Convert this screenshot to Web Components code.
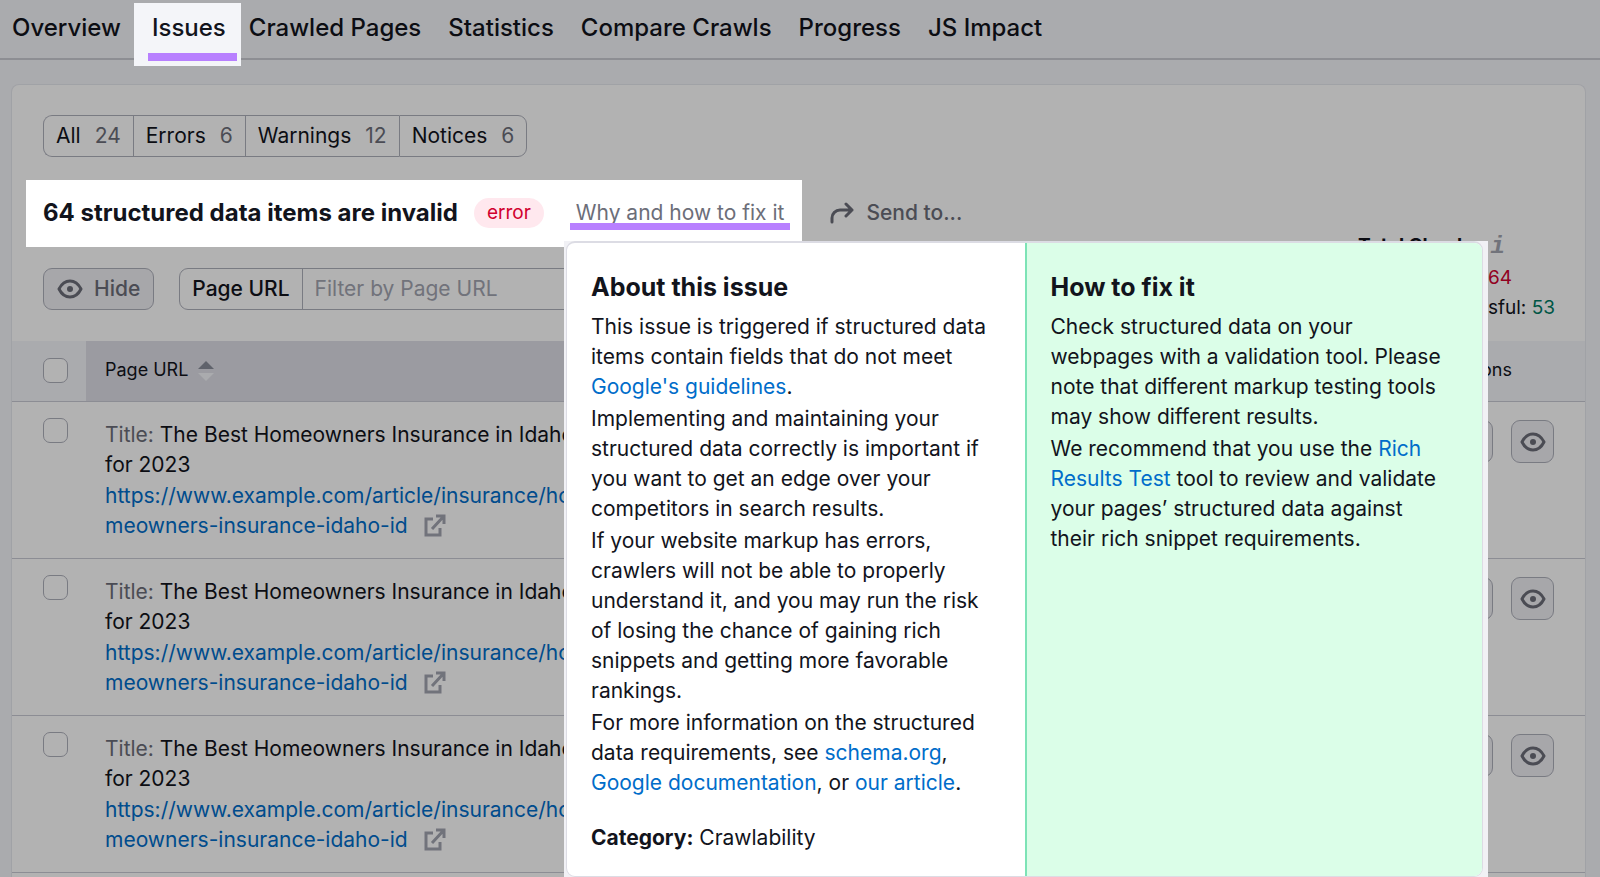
<!DOCTYPE html>
<html lang="en">
<head>
<meta charset="utf-8">
<title>Site Audit: Issues</title>
<style>
    html, body { height: 100%; }
    body {
        --text: #12141c;
        --muted: #6c6e79;
        --line: #c9cad4;
        --control-line: #aeb0bb;
        --link: #006dca;
        --accent: #b880ff;
        --page: #f4f5f9;
        margin: 0;
        overflow: hidden;
        background: var(--page);
        color: var(--text);
        font: 21px/30px Inter, "Liberation Sans", sans-serif;
    }
    issue-popover a { color: var(--link); text-decoration: none; }
    issue-popover[hidden] { display: none; }
</style>
</head>
<body>

<audit-page>
    <audit-tabs slot="tabs">
        <audit-tab>Overview</audit-tab>
        <audit-tab active>Issues</audit-tab>
        <audit-tab>Crawled Pages</audit-tab>
        <audit-tab>Statistics</audit-tab>
        <audit-tab>Compare Crawls</audit-tab>
        <audit-tab>Progress</audit-tab>
        <audit-tab>JS Impact</audit-tab>
    </audit-tabs>

    <issue-filter></issue-filter>
    <issue-headline level="error">64 structured data items are invalid</issue-headline>
    <issue-toolbar></issue-toolbar>
    <issue-table></issue-table>

    <issue-popover slot="popover">
        <h3 slot="about-title">About this issue</h3>
        <p slot="about">This issue is triggered if structured data items contain fields that do not meet <a href="#guidelines">Google's guidelines</a>.</p>
        <p slot="about">Implementing and maintaining your structured data correctly is important if you want to get an edge over your competitors in search results.</p>
        <p slot="about">If your website markup has errors, crawlers will not be able to properly understand it, and you may run the risk of losing the chance of gaining rich snippets and getting more favorable rankings.</p>
        <p slot="about">For more information on the structured data requirements, see <a href="#schema">schema.org</a>, <a href="#docs">Google documentation</a>, or <a href="#article">our article</a>.</p>
        <span slot="category">Crawlability</span>
        <h3 slot="fix-title">How to fix it</h3>
        <p slot="fix">Check structured data on your webpages with a validation tool. Please note that different markup testing tools may show different results.</p>
        <p slot="fix">We recommend that you use the <a href="#rich-results">Rich Results Test</a> tool to review and validate your pages’ structured data against their rich snippet requirements.</p>
    </issue-popover>
</audit-page>

<template id="template-page">
    <slot name="tabs"></slot>
    <main>
        <slot></slot>
        <slot name="popover"></slot>
    </main>
    <div class="dim"></div>
    <style>
        :host { display: flex; flex-direction: column; height: 100vh; }
        main {
            position: relative;
            flex: 1;
            min-height: 0;
            overflow: hidden;
            margin: 24px 14px 0 11px;
            padding-top: 30px;
            background: #fff;
            border: 1px solid #e6e8ee;
            border-bottom: 0;
            border-radius: 8px 8px 0 0;
            box-sizing: border-box;
        }
        .dim {
            position: fixed;
            inset: 0;
            z-index: 1;
            background: rgba(0, 0, 0, 0.3);
            pointer-events: none;
        }
    </style>
</template>

<template id="template-tabs">
    <nav><slot></slot></nav>
    <style>
        :host { display: block; }
        nav {
            display: flex;
            gap: 27px;
            height: 58px;
            padding-left: 12px;
            border-bottom: 2px solid #cbccd3;
        }
    </style>
</template>

<template id="template-tab">
    <a href="#"><slot></slot></a>
    <style>
        :host { display: block; }
        a {
            display: block;
            box-sizing: border-box;
            padding-top: 12px;
            color: var(--text);
            font-size: 24px;
            line-height: 32px;
            font-weight: 500;
            white-space: nowrap;
            text-decoration: none;
        }
        :host([active]) { margin: 3px -19px 0 -14px; }
        :host([active]) a {
            position: relative;
            z-index: 2;
            height: 63px;
            padding: 9px 15px 0 18px;
            background: var(--page);
        }
        :host([active]) a::after {
            content: "";
            position: absolute;
            left: 14px;
            right: 4px;
            bottom: 5px;
            height: 8px;
            background: var(--accent);
        }
    </style>
</template>

<template id="template-filter">
    <button>All <span>24</span></button>
    <button>Errors <span>6</span></button>
    <button>Warnings <span>12</span></button>
    <button>Notices <span>6</span></button>
    <style>
        :host { display: flex; margin-left: 31px; }
        button {
            display: flex;
            gap: 14px;
            align-items: center;
            height: 42px;
            padding: 0 12px;
            border: 1px solid var(--control-line);
            border-right-width: 0;
            background: none;
            color: var(--text);
            font: inherit;
        }
        button:first-child { border-radius: 9px 0 0 9px; }
        button:last-of-type { border-right-width: 1px; border-radius: 0 9px 9px 0; }
        span { color: var(--muted); }
    </style>
</template>

<template id="template-headline">
    <div class="spotlight">
        <h2><slot></slot></h2>
        <span class="level"></span>
        <button class="why">Why and how to fix it</button>
    </div>
    <button class="send">
        <svg width="24" height="24" viewBox="0 0 24 24" fill="none" stroke="currentColor" stroke-width="3" stroke-linecap="round" stroke-linejoin="round">
            <path d="M2 21v-4a8 8 0 0 1 8-8h12M16 3l6 6-6 6"/>
        </svg>
        Send to...
    </button>
    <style>
        :host { display: flex; margin: 23px 0 0 14px; height: 67px; }
        .spotlight {
            position: relative;
            z-index: 2;
            display: flex;
            align-items: center;
            height: 67px;
            box-sizing: border-box;
            padding: 0 12px 2px 17px;
            background: #fff;
        }
        h2 { margin: 0; font-size: 24px; line-height: 32px; font-weight: 700; white-space: nowrap; }
        .level {
            margin-left: 16px;
            padding: 0 13px;
            border-radius: 16px;
            background: #ffe8ee;
            color: #d1002f;
            font-size: 19px;
        }
        button { padding: 0; border: 0; background: none; color: var(--muted); font: inherit; white-space: nowrap; }
        .why { position: relative; margin-left: 26px; padding: 0 6px; }
        .why::after {
            content: "";
            position: absolute;
            left: 0;
            right: 0;
            bottom: -2px;
            height: 7px;
            background: var(--accent);
        }
        .send { display: flex; align-items: center; gap: 12px; margin-left: 28px; padding-bottom: 2px; font-weight: 500; }
    </style>
</template>

<template id="template-toolbar">
    <button>
        <eye-icon></eye-icon>
        Hide
    </button>
    <div class="filter">
        <label for="url">Page URL</label>
        <input id="url" type="text" placeholder="Filter by Page URL">
    </div>
    <div class="totals">
        <div class="total"><strong>Total Checks</strong> <i>i</i></div>
        <div class="bad">64</div>
        <div>Successful: <b>53</b></div>
    </div>
    <style>
        :host { display: flex; margin: 21px 30px 0 31px; height: 73px; }
        button, .filter {
            display: flex;
            box-sizing: border-box;
            height: 42px;
            border: 1px solid var(--control-line);
            border-radius: 9px;
        }
        button {
            align-items: center;
            gap: 11px;
            padding: 0 13px;
            background: #f0f0f4;
            color: var(--muted);
            font: inherit;
            font-weight: 500;
        }
        .filter { margin-left: 25px; width: 480px; }
        label { padding: 5px 12px 0; border-right: 1px solid var(--control-line); font-weight: 500; white-space: nowrap; }
        input {
            flex: 1;
            min-width: 0;
            padding: 0 12px;
            border: 0;
            background: none;
            font: inherit;
            color: var(--text);
        }
        input::placeholder { color: #a3a5b1; opacity: 1; }
        .totals {
            display: flex;
            flex-direction: column;
            align-items: flex-end;
            margin: -37px 0 0 auto;
            font-size: 19px;
            white-space: nowrap;
        }
        .total { display: flex; gap: 12px; padding-right: 50px; }
        i {
            color: #a3a5b1;
            font: italic 700 24px/32px "Liberation Mono", monospace;
        }
        .bad { padding-right: 43px; color: #d1002f; }
        b { font-weight: 400; color: #007c65; }
    </style>
</template>

<template id="template-table">
    <table>
        <thead>
            <tr>
                <th class="check"><input type="checkbox" aria-label="Select all pages"></th>
                <th class="url">
                    Page URL
                    <svg width="16" height="20" viewBox="0 0 16 20"><path d="M0 8L8 0l8 8z" fill="#898d9a"/><path d="M0 12h16l-8 8z" fill="#f4f5f9"/></svg>
                </th>
                <th class="actions">Actions</th>
            </tr>
        </thead>
        <tbody></tbody>
    </table>
    <style>
        :host { display: block; }
        table { width: 100%; border-spacing: 0; table-layout: fixed; }
        th, td { border-bottom: 1px solid var(--line); box-sizing: border-box; }
        th {
            height: 61px;
            padding: 0 0 2px;
            background: var(--page);
            font-size: 18px;
            font-weight: 400;
            text-align: left;
        }
        .check { width: 74px; }
        th.url { padding-left: 19px; background: #dfdfe7; }
        th.url svg { margin-left: 5px; vertical-align: -5px; }
        th.actions { width: 137px; }
        td { height: 157px; padding: 18px 0 0; vertical-align: top; }
        td.check { padding-top: 16px; }
        td.url { padding-left: 19px; }
        p { width: 480px; margin: 0 0 1px; }
        p.title span { color: var(--muted); }
        a { color: var(--link); text-decoration: none; }
        a svg { margin-left: 10px; vertical-align: -4px; color: #a3a5b1; }
        input {
            appearance: none;
            display: block;
            box-sizing: border-box;
            width: 25px;
            height: 25px;
            margin: 0 0 0 31px;
            border: 1px solid var(--control-line);
            border-radius: 7px;
            background: #fff;
        }
        .buttons { display: flex; gap: 18px; justify-content: flex-end; padding-right: 31px; }
        button {
            display: flex;
            align-items: center;
            justify-content: center;
            width: 43px;
            height: 43px;
            padding: 0;
            border: 1px solid var(--control-line);
            border-radius: 9px;
            background: #f0f0f4;
            color: var(--muted);
        }
    </style>
</template>

<template id="template-popover">
    <div class="card">
        <section>
            <slot name="about-title"></slot>
            <slot name="about"></slot>
            <div class="category"><b>Category:</b> <slot name="category"></slot></div>
        </section>
        <section class="fix">
            <slot name="fix-title"></slot>
            <slot name="fix"></slot>
        </section>
    </div>
    <style>
        :host {
            position: absolute;
            z-index: 3;
            top: 156px;
            left: 552px;
            right: 97px;
            box-sizing: border-box;
            padding: 0 5px 0 2px;
            background: #f1f1f5;
        }
        .card {
            display: grid;
            grid-template-columns: 1fr 1fr;
            overflow: hidden;
            border: 1px solid #dcdce4;
            border-top-width: 2px;
            border-radius: 9px;
            background: #fff;
        }
        section { padding: 28px 32px 23px 24px; }
        .fix { border-left: 2px solid #7de3b6; background: #dbfee8; }
        ::slotted(h3) { margin: 0 0 9px; font-size: 25px; line-height: 32px; font-weight: 700; }
        ::slotted(p) { margin: 0 0 2px; }
        .category { margin-top: 25px; }
    </style>
</template>

<script>
    // Clones <template id="template-..."> into an open shadow root
    class TemplateElement extends HTMLElement {
        constructor(name) {
            super();
            const template = document.getElementById('template-' + name).content;
            this.shadow = this.attachShadow({ mode: 'open' });
            this.shadow.appendChild(template.cloneNode(true));
        }
    }

    customElements.define('eye-icon', class extends HTMLElement {
        constructor() {
            super();
            this.attachShadow({ mode: 'open' }).innerHTML = `
                <style>:host { display: flex; }</style>
                <svg width="26" height="20" viewBox="0 0 26 20" fill="none" stroke="currentColor" stroke-width="3">
                    <path d="M2 10C4.500 5 8.500 2 13 2s8.500 3 11 8c-2.500 5-6.500 8-11 8S4.500 15 2 10z" stroke-linejoin="round"/>
                    <circle cx="13" cy="10" r="3" fill="currentColor" stroke="none"/>
                </svg>`;
        }
    });

    customElements.define('audit-page', class extends TemplateElement {
        constructor() { super('page'); }
    });

    customElements.define('audit-tabs', class extends TemplateElement {
        constructor() { super('tabs'); }
    });

    customElements.define('audit-tab', class extends TemplateElement {
        constructor() { super('tab'); }
    });

    customElements.define('issue-filter', class extends TemplateElement {
        constructor() { super('filter'); }
    });

    customElements.define('issue-headline', class extends TemplateElement {
        constructor() {
            super('headline');
            this.shadow.querySelector('.level').textContent = this.getAttribute('level');
            const popover = document.querySelector('issue-popover');
            this.shadow.querySelector('.why').onclick = () => popover.toggleAttribute('hidden');
        }
    });

    customElements.define('issue-toolbar', class extends TemplateElement {
        constructor() { super('toolbar'); }
    });

    const pages = Array(3).fill({
        title: 'The Best Homeowners Insurance in Idaho for 2023',
        url: ['https://www.example.com/article/insurance/ho', 'meowners-insurance-idaho-id']
    });

    customElements.define('issue-table', class extends TemplateElement {
        constructor() {
            super('table');
            this.shadow.querySelector('tbody').innerHTML = pages.map(({ title, url }) => `
                <tr>
                    <td class="check"><input type="checkbox" aria-label="Select page"></td>
                    <td class="url">
                        <p class="title"><span>Title:</span> ${title}</p>
                        <a href="#">${url.join('<br>')}
                            <svg width="22" height="23" viewBox="0 0 22 23" fill="none" stroke="currentColor" stroke-width="3">
                                <path d="M9 5H2v16h14v-7M12 2h8v8M20 2L8 15"/>
                            </svg></a>
                    </td>
                    <td><div class="buttons">
                        <button aria-label="Send"></button>
                        <button aria-label="Hide"><eye-icon></eye-icon></button>
                    </div></td>
                </tr>`).join('');
        }
    });

    customElements.define('issue-popover', class extends TemplateElement {
        constructor() { super('popover'); }
    });
</script>
</body>
</html>
